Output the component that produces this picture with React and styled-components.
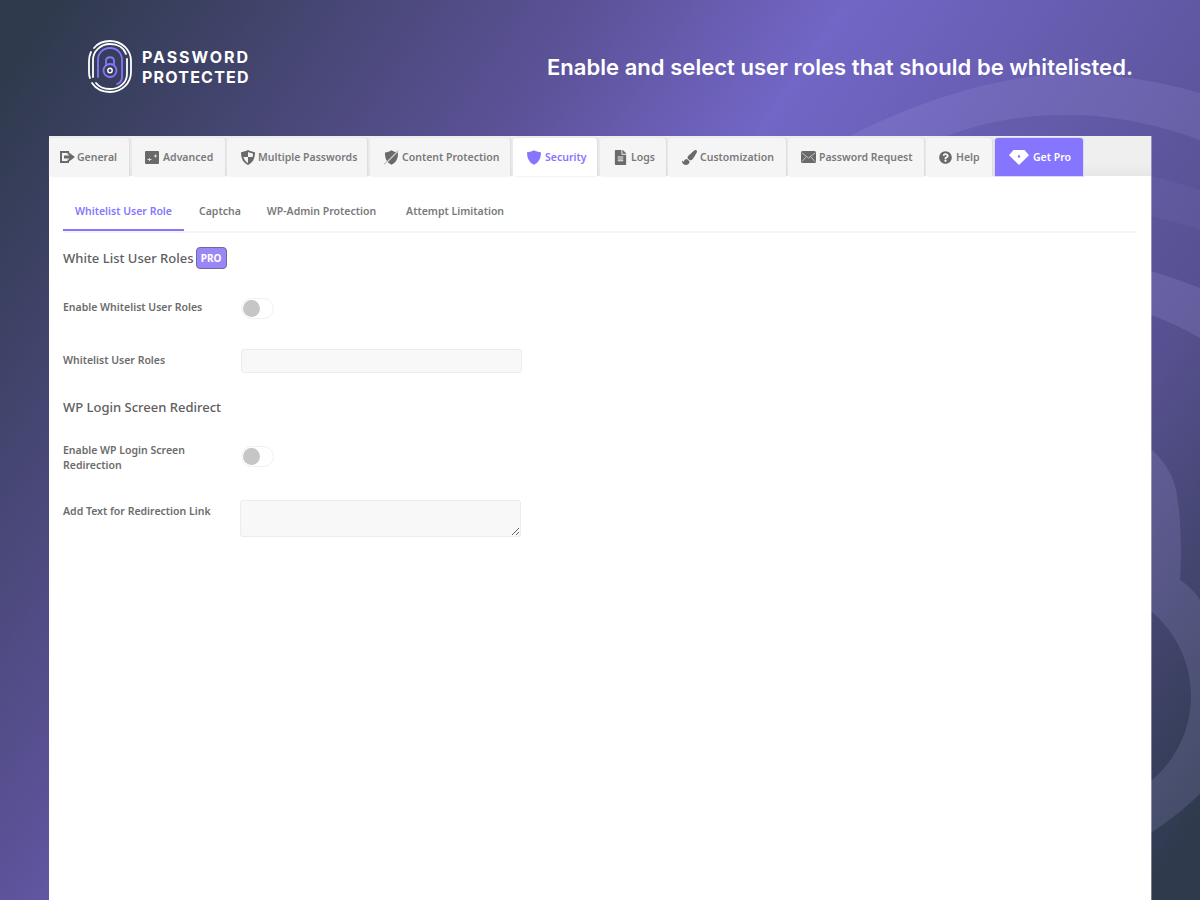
import React from 'react';
import styled, { createGlobalStyle } from 'styled-components';
import { FaFileAlt, FaPaintBrush, FaQuestionCircle } from 'react-icons/fa';

const GlobalStyle = createGlobalStyle`
  html, body {
    margin: 0;
    padding: 0;
    height: 100%;
    overflow: hidden;
  }
  body {
    font-family: "Noto Sans", "Open Sans", "Liberation Sans", sans-serif;
  }
`;

const Page = styled.div`
  position: relative;
  width: 1200px;
  height: 900px;
  overflow: hidden;
  background: linear-gradient(124deg, #2f3a4d 3%, #5c5298 33%, #7266c6 47%, #56508f 78%, #2f3a4d 97%);
`;

const Backdrop = styled.svg`
  position: absolute;
  left: 0;
  top: 0;
`;

const Header = styled.header`
  position: relative;
  height: 136px;
  box-sizing: border-box;
  padding: 40px 67px 0 88px;
  display: flex;
  justify-content: space-between;
  align-items: flex-start;
`;

const Brand = styled.div`
  display: flex;
  align-items: center;
  gap: 10px;
  height: 53px;
`;

const BrandLine = styled.div`
  font-family: Inter, "Liberation Sans", sans-serif;
  font-weight: 700;
  font-size: 16px;
  line-height: 20px;
  letter-spacing: ${p => p.$spacing}px;
  color: #fff;
`;

const Headline = styled.h1`
  margin: 13px 0 0;
  font-family: Inter, "Liberation Sans", sans-serif;
  font-weight: 600;
  font-size: 22px;
  line-height: 29px;
  letter-spacing: 0.04px;
  color: #fff;
`;

const Panel = styled.main`
  position: relative;
  margin: 0 49px;
  height: 764px;
  background: #fff;
  box-shadow: 1px 0 0 rgba(255, 255, 255, 0.35);
`;

const TabBar = styled.nav`
  height: 40px;
  box-sizing: border-box;
  padding-top: 2px;
  display: flex;
  background: linear-gradient(#efefef 70%, #e6e6e6);
`;

const Tab = styled.div`
  width: ${p => p.$w}px;
  margin-right: ${p => p.$gap}px;
  padding-left: ${p => p.$pad}px;
  box-sizing: border-box;
  display: flex;
  align-items: center;
  gap: ${p => p.$iconGap}px;
  border-radius: 3px 3px 0 0;
  background: ${p => (p.$active ? '#fff' : p.$pro ? '#8676ff' : '#f5f5f5')};
  box-shadow: ${p => (p.$pro ? '0 0 0 1px #dcd8f5' : '1px 0 2px #d9d9d9')};
  color: ${p => (p.$active ? '#8676ff' : p.$pro ? '#fff' : '#7a7a7a')};
  font-size: 10.5px;
  font-weight: 600;
  white-space: nowrap;
  svg {
    flex: none;
    color: ${p => (p.$active ? '#8676ff' : p.$pro ? '#fff' : '#6a6a6a')};
  }
`;

const Body = styled.div`
  padding: 21px 15px 0 14px;
`;

const SubTabs = styled.div`
  display: flex;
  border-bottom: 2px solid #f5f5f5;
`;

const SubTab = styled.div`
  height: 34px;
  box-sizing: border-box;
  padding: 6px 12px 0;
  margin-right: ${p => p.$gap}px;
  font-size: 10.5px;
  font-weight: 600;
  line-height: 16px;
  color: ${p => (p.$active ? '#8676ff' : '#7a7a7a')};
  border-bottom: 2px solid ${p => (p.$active ? '#8676ff' : 'transparent')};
`;

const SectionTitle = styled.h2`
  display: flex;
  align-items: center;
  gap: 2px;
  height: 22px;
  margin: ${p => p.$top}px 0 0;
  font-size: 13px;
  font-weight: 500;
  color: #606060;
`;

const ProBadge = styled.span`
  box-sizing: border-box;
  width: 31px;
  height: 22px;
  display: flex;
  align-items: center;
  justify-content: center;
  background: #9b86f5;
  border: 1px solid #6e6a9e;
  border-radius: 4px;
  color: #fff;
  font-size: 10px;
  font-weight: 700;
`;

const Row = styled.div`
  display: grid;
  grid-template-columns: ${p => p.$col || 178}px 281px;
  margin-top: ${p => p.$top}px;
`;

const Label = styled.label`
  font-size: 10.5px;
  font-weight: 600;
  line-height: 15px;
  color: #6c6c6c;
  padding-top: ${p => p.$top || 0}px;
  padding-right: 10px;
`;

const Switch = styled.span`
  box-sizing: border-box;
  width: 33px;
  height: 21px;
  margin-top: ${p => p.$top || 0}px;
  display: flex;
  align-items: center;
  padding-left: 1px;
  background: #fff;
  border: 1px solid #f0f0f0;
  border-radius: 11px;
  &::before {
    content: '';
    width: 17px;
    height: 17px;
    border-radius: 50%;
    background: #c6c6c6;
  }
`;

const TextField = styled.div`
  box-sizing: border-box;
  height: 24px;
  background: #f8f8f8;
  border: 1px solid #ececec;
  border-radius: 3px;
`;

const TextArea = styled.textarea`
  display: block;
  box-sizing: border-box;
  width: 281px;
  height: 37px;
  margin: 0;
  background: #f8f8f8;
  border: 1px solid #ececec;
  border-radius: 3px;
`;

const LogoMark = () => (
  <svg width="44" height="53" viewBox="0 0 44 53" fill="none">
    <g stroke="#fff" strokeWidth="1.8" strokeLinecap="round">
      <path d="M6 8C10 3 15 1 22 1c12 0 21 9 21 20v11c0 11-9 20-21 20-8 0-14-3-18-9" />
      <path d="M2 38C1 36 1 34 1 32V21c0-3 .6-6 2-9" />
      <path d="M39 19v15c0 9-8 15-17 15-6 0-11-2-14-6" />
      <path d="M5 37V20C5 11 13 4 22 4c8 0 14 4 16 10" />
    </g>
    <g stroke="#8676ff" strokeWidth="1.8" strokeLinecap="round">
      <path d="M10 37V20c0-7 5-12 12-12s12 5 12 12v17c0 3-2 6-5 7" />
      <rect x="15.5" y="24" width="13" height="13" rx="6.5" />
      <path d="M18 25v-4c0-5 8-5 8 0v4" />
    </g>
    <circle cx="22" cy="30.5" r="2.2" stroke="#fff" strokeWidth="1.4" />
  </svg>
);

const GeneralIcon = () => (
  <svg width="15" height="12" viewBox="0 0 15 12" fill="#6a6a6a">
    <path d="M0 0h9v3.500H7.500V2H2v8h5.500V8.500H9V12H0z" />
    <path d="M4 4.500h5V1.500L15 6 9 10.500v-3H4z" />
  </svg>
);

const AdvancedIcon = () => (
  <svg width="14" height="13" viewBox="0 0 14 13">
    <rect width="14" height="13" rx="1" fill="#6a6a6a" />
    <path d="M2.500 8.500h4M9 5h3M4.500 7v3M10.500 3.500v3" stroke="#ddd" strokeWidth="1" />
  </svg>
);

const QuarterShieldIcon = () => (
  <svg width="14" height="15" viewBox="0 0 14 15">
    <path d="M7 0c2 1 4 1.800 7 2.200C14 8 12 12.500 7 15 2 12.500 0 8 0 2.200 3 1.800 5 1 7 0z" fill="#6a6a6a" />
    <path d="M7 2c1.400.600 2.800 1.100 5 1.500 0 1.300-.100 2.500-.400 3.500H7zM7 7v6.200C4.700 11.800 3.200 9.700 2.500 7z" fill="#f5f5f5" />
  </svg>
);

const ContentIcon = () => (
  <svg width="15" height="15" viewBox="0 0 15 15" fill="#6a6a6a">
    <path d="M1 2.500C3.500 2.300 5.800 1.300 7.500.300c1.700 1 4 2 6.500 2.200.200 6-1.800 10-6.500 12.200C2.800 12.500.800 8.500 1 2.500z" />
    <path d="M.500 14.500L14.500 .500" stroke="#f5f5f5" strokeWidth="1.100" />
    <path d="M0 14.500L14 .500" stroke="#6a6a6a" strokeWidth=".6" />
  </svg>
);

const SolidShieldIcon = () => (
  <svg width="14" height="15" viewBox="0 0 14 15" fill="#8676ff">
    <path d="M7 .300c2 1 4 1.700 7 2C14 8 12 12.600 7 14.800 2 12.600 0 8 0 2.300c3-.300 5-1 7-2z" />
  </svg>
);

const EnvelopeIcon = () => (
  <svg width="15" height="12" viewBox="0 0 15 12">
    <rect width="15" height="12" rx="1.500" fill="#6a6a6a" />
    <path d="M1 2l6.500 5L14 2M1 10.500l4-4.500M14 10.500l-4-4.500" stroke="#e4e4e4" strokeWidth=".7" fill="none" />
  </svg>
);

const GemIcon = () => (
  <svg width="20" height="15" viewBox="0 0 20 15">
    <path d="M4.500 0h11L20 5.200 10 15 0 5.200z" fill="#fff" />
    <path d="M10 4.500l1.300 2L10 8.300 8.700 6.500z" fill="#8676ff" />
  </svg>
);

const tabs = [
  { name: 'General', w: 80, gap: 3, pad: 11, iconGap: 2, icon: <GeneralIcon /> },
  { name: 'Advanced', w: 93, gap: 2, pad: 13, iconGap: 4, icon: <AdvancedIcon /> },
  { name: 'Multiple Passwords', w: 140, gap: 3, pad: 14, iconGap: 3, icon: <QuarterShieldIcon /> },
  { name: 'Content Protection', w: 140, gap: 3, pad: 14, iconGap: 3, icon: <ContentIcon /> },
  { name: 'Security', w: 84, gap: 3, pad: 14, iconGap: 4, active: true, icon: <SolidShieldIcon /> },
  { name: 'Logs', w: 66, gap: 2, pad: 13, iconGap: 3, icon: <FaFileAlt size={15} /> },
  { name: 'Customization', w: 118, gap: 2, pad: 14, iconGap: 3, icon: <FaPaintBrush size={15} /> },
  { name: 'Password Request', w: 136, gap: 2, pad: 13, iconGap: 3, icon: <EnvelopeIcon /> },
  { name: 'Help', w: 66, gap: 3, pad: 13, iconGap: 4, icon: <FaQuestionCircle size={13} /> },
  { name: 'Get Pro', w: 88, gap: 0, pad: 14, iconGap: 4, pro: true, icon: <GemIcon /> },
];

const App = () => (
  <Page>
    <GlobalStyle />
    <Backdrop width="1200" height="900" viewBox="0 0 1200 900">
      <g fill="#c8bfff">
        <path
          fillOpacity=".12"
          d="M850 136C930 95 1020 70 1090 74C1130 76 1170 84 1200 93V140C1160 125 1110 114 1067 115C1020 115 985 122 947 136Z"
        />
        <path fillOpacity=".05" d="M1100 165Q1155 175 1200 190V230Q1155 215 1100 205Z" />
        <path fillOpacity=".14" d="M1100 258Q1155 270 1200 288V338Q1155 312 1100 300Z" />
        <path
          fillOpacity=".14"
          fillRule="evenodd"
          d="M1152 450C1165 462 1173 475 1176 490C1181 515 1182 550 1180 580C1188 585 1195 592 1200 600V794C1185 808 1168 822 1152 832H1100V450ZM1081 586A110 110 0 1 0 1081 806A110 110 0 1 0 1081 586Z"
        />
      </g>
    </Backdrop>
    <Header>
      <Brand>
        <LogoMark />
        <div>
          <BrandLine $spacing={1.95}>PASSWORD</BrandLine>
          <BrandLine $spacing={1.2}>PROTECTED</BrandLine>
        </div>
      </Brand>
      <Headline>Enable and select user roles that should be whitelisted.</Headline>
    </Header>
    <Panel>
      <TabBar>
        {tabs.map(t => (
          <Tab key={t.name} $w={t.w} $gap={t.gap} $pad={t.pad} $iconGap={t.iconGap} $active={t.active} $pro={t.pro}>
            {t.icon}
            {t.name}
          </Tab>
        ))}
      </TabBar>
      <Body>
        <SubTabs>
          <SubTab $active $gap={3}>Whitelist User Role</SubTab>
          <SubTab $gap={2}>Captcha</SubTab>
          <SubTab $gap={6}>WP-Admin Protection</SubTab>
          <SubTab $gap={0}>Attempt Limitation</SubTab>
        </SubTabs>
        <SectionTitle $top={14}>
          White List User Roles <ProBadge>PRO</ProBadge>
        </SectionTitle>
        <Row $top={29}>
          <Label $top={2}>Enable Whitelist User Roles</Label>
          <Switch />
        </Row>
        <Row $top={30}>
          <Label $top={4}>Whitelist User Roles</Label>
          <TextField />
        </Row>
        <SectionTitle $top={23}>WP Login Screen Redirect</SectionTitle>
        <Row $top={25}>
          <Label>Enable WP Login Screen Redirection</Label>
          <Switch $top={3} />
        </Row>
        <Row $top={27} $col={177}>
          <Label $top={4}>Add Text for Redirection Link</Label>
          <TextArea />
        </Row>
      </Body>
    </Panel>
  </Page>
);

export default App;
